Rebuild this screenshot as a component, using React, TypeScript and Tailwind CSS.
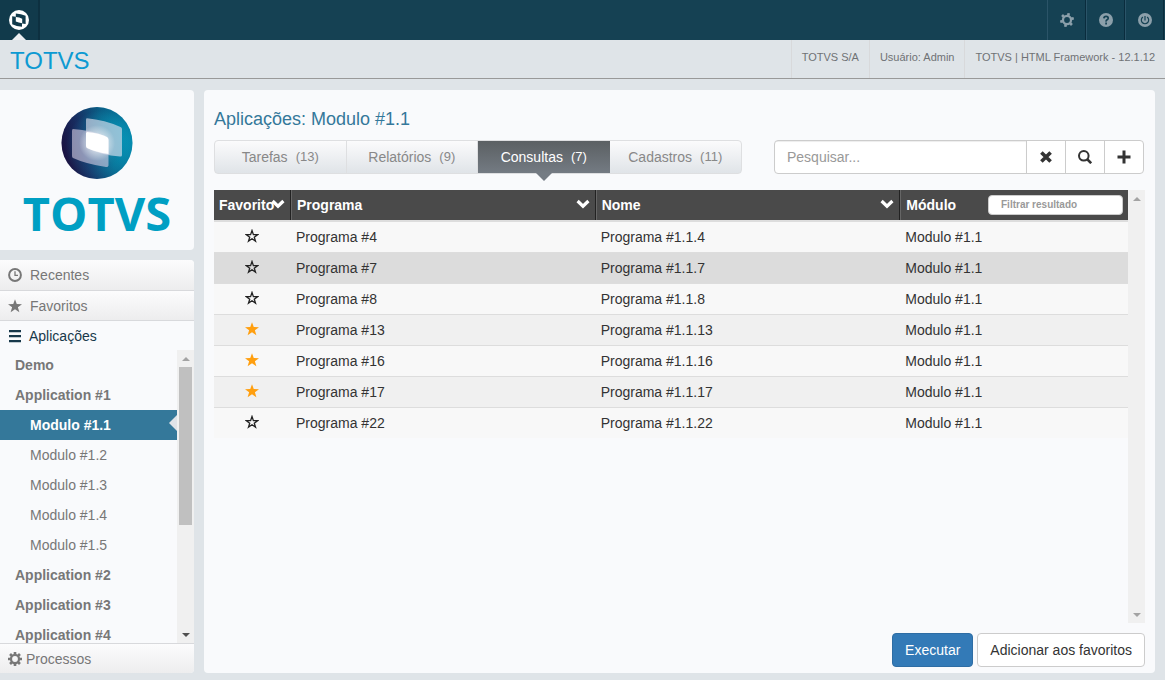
import type { ReactNode } from "react";

const STAR = "M8 0.2 10 5.8 16 5.9 11.3 9.5 13 15.2 8 11.8 3 15.2 4.7 9.5 0 5.9 6 5.8Z";

function StarIcon({ filled }: { filled: boolean }) {
  return filled ? (
    <svg viewBox="0 0 16 16" className="size-3.5 fill-[#ff9f0f]"><path d={STAR} /></svg>
  ) : (
    <svg viewBox="0 0 16 16" className="size-3.5 fill-none stroke-[#222] stroke-[1.5]">
      <path d="M8 1.7 9.6 6.4 14.4 6.5 10.6 9.4 12 13.9 8 11.2 4 13.9 5.4 9.4 1.6 6.5 6.4 6.4Z" />
    </svg>
  );
}

function Gear({ teeth, className }: { teeth: 6 | 8; className: string }) {
  const angles = Array.from({ length: teeth }, (_, i) => (i * 360) / teeth);
  return (
    <svg viewBox="0 0 16 16" className={className} stroke="currentColor" fill="none">
      <circle cx="8" cy="8" r="4.6" strokeWidth="2.6" />
      {angles.map((a) => (
        <path key={a} d="M8 0V3" strokeWidth="3" transform={`rotate(${a + (teeth === 6 ? 15 : 0)} 8 8)`} />
      ))}
    </svg>
  );
}

function Chevron() {
  return (
    <svg viewBox="0 0 14 14" className="size-3.5 fill-none stroke-white stroke-[3.2]">
      <path d="M1.6 4 7 9.2 12.4 4" />
    </svg>
  );
}

function ScrollArrow({ up, dark }: { up?: boolean; dark?: boolean }) {
  return (
    <span className="flex h-[17px] items-center justify-center">
      <svg viewBox="0 0 8 4" className={dark ? "h-1 w-2 fill-[#505050]" : "h-1 w-2 fill-[#a3a3a3]"}>
        <path d={up ? "M0 4 4 0 8 4Z" : "M0 0 4 4 8 0Z"} />
      </svg>
    </span>
  );
}

function BrandLogo() {
  return (
    <div className="flex h-40 flex-col items-center rounded-r bg-[#f9fafc] pt-4">
      <svg viewBox="0 0 72 74" className="h-[74px] w-[72px] shrink-0">
        <defs>
          <linearGradient id="orb" x1="0" x2="1" y1="0.65" y2="0.4">
            <stop offset="0" stopColor="#1d103d" />
            <stop offset="0.3" stopColor="#17376a" />
            <stop offset="0.65" stopColor="#06789c" />
            <stop offset="1" stopColor="#00a3c4" />
          </linearGradient>
          <radialGradient id="shade" cx="0.56" cy="0.55" r="0.5">
            <stop offset="0" stopColor="#6fb9d3" stopOpacity="0.5" />
            <stop offset="0.6" stopColor="#257ba2" stopOpacity="0.1" />
            <stop offset="1" stopColor="#171044" stopOpacity="0.25" />
          </radialGradient>
          <radialGradient id="glow">
            <stop offset="0" stopColor="#fff" />
            <stop offset="0.4" stopColor="#fff" stopOpacity="0.55" />
            <stop offset="1" stopColor="#fff" stopOpacity="0" />
          </radialGradient>
        </defs>
        <ellipse cx="36" cy="37" rx="35.5" ry="36" fill="url(#orb)" />
        <ellipse cx="36" cy="37" rx="35.5" ry="36" fill="url(#shade)" />
        <path d="M26 12.3Q44 14 59.5 21Q61 21.5 61 23V49Q61 51 59 50.5Q40 49 26 42Q25 41 25 39.5V14Q25 12 26 12.3Z" fill="#dcdfec" fillOpacity="0.65" />
        <path d="M12 23Q31 24 46 31Q47.5 32 47.5 34V59.5Q47 61.5 45 61Q25 58 12 52Q11 51.5 11 50V25Q11 23 12 23Z" fill="#d8cfe4" fillOpacity="0.6" />
        <circle cx="36" cy="37" r="18" fill="url(#glow)" />
        <path d="M26 26Q38 27 46 31Q47.5 32 47.5 34V48Q35 46 26 42Q25 41 25 39.5V27Z" fill="#fff" />
      </svg>
      <span className="font-['Open_Sans',sans-serif] text-[47px] font-bold leading-[66px] text-[#009fc3]">TOTVS</span>
    </div>
  );
}

const navItems = [
  { label: "Demo", level: 0 },
  { label: "Application #1", level: 0 },
  { label: "Modulo #1.1", level: 1, active: true },
  { label: "Modulo #1.2", level: 1 },
  { label: "Modulo #1.3", level: 1 },
  { label: "Modulo #1.4", level: 1 },
  { label: "Modulo #1.5", level: 1 },
  { label: "Application #2", level: 0 },
  { label: "Application #3", level: 0 },
  { label: "Application #4", level: 0 },
];

const tabs = [
  { label: "Tarefas", count: 13 },
  { label: "Relatórios", count: 9 },
  { label: "Consultas", count: 7, active: true },
  { label: "Cadastros", count: 11 },
];

const rows = [
  { id: 4, fav: false }, { id: 7, fav: false }, { id: 8, fav: false }, { id: 13, fav: true },
  { id: 16, fav: true }, { id: 17, fav: true }, { id: 22, fav: false },
];

function TopButton({ label, children }: { label: string; children: ReactNode }) {
  return (
    <button aria-label={label} className="flex w-[39px] items-center justify-center border-l border-r border-l-[#2b5468] border-r-[#0a2c3d] text-[#8b9faa]">
      {children}
    </button>
  );
}

function Sidebar() {
  const section = "flex shrink-0 items-center border-b border-[#d8d9dc] bg-linear-to-b from-[#fcfcfd] to-[#ededee] pl-2 text-[#777]";
  return (
    <aside className="flex w-[194px] shrink-0 flex-col gap-2.5">
      <BrandLogo />
      <nav className="flex min-h-0 flex-1 flex-col overflow-hidden rounded-r bg-[#f9fafc]">
        <button className={`${section} h-[31px] gap-2`}>
          <svg viewBox="0 0 14 14" className="size-3.5 fill-none stroke-current stroke-2">
            <circle cx="7" cy="7" r="5.9" /><path d="M7 3.2V7.4H10" strokeWidth="1.3" />
          </svg>
          Recentes
        </button>
        <button className={`${section} h-[30px] gap-2`}>
          <svg viewBox="0 0 16 16" className="size-3.5 fill-current"><path d={STAR} /></svg>
          Favoritos
        </button>
        <button className="flex h-[29px] shrink-0 items-center gap-2 pl-2 text-[#17384a]">
          <svg viewBox="0 0 13 14" className="h-3.5 w-[13px] fill-current">
            <path d="M1 1H13V3.2H1ZM1 6H13V8.2H1ZM1 11H13V13.2H1Z" />
          </svg>
          Aplicações
        </button>
        <div className="flex min-h-0 flex-1">
          <ul className="min-w-0 flex-1 overflow-hidden">
            {navItems.map((item) => (
              <li key={item.label}>
                <a
                  href="#"
                  className={
                    item.active
                      ? "relative flex h-[30px] items-center bg-[#34789a] pl-[30px] font-bold text-white"
                      : item.level === 1
                        ? "flex h-[30px] items-center pl-[30px] text-[#777]"
                        : "flex h-[30px] items-center pl-[15px] font-bold text-[#777]"
                  }
                >
                  {item.label}
                  {item.active && (
                    <svg viewBox="0 0 8 16" className="absolute right-0 top-[5px] h-4 w-2 fill-[#dfe3e8]"><path d="M8 0V16L0 8Z" /></svg>
                  )}
                </a>
              </li>
            ))}
          </ul>
          <div aria-hidden="true" className="flex w-[17px] flex-col bg-[#f0f0f0]">
            <ScrollArrow up />
            <div className="mx-0.5 h-[54%] bg-[#c0c0c0]" />
            <div className="mt-auto"><ScrollArrow dark /></div>
          </div>
        </div>
        <button className="flex h-[30px] shrink-0 items-center gap-1 border-t border-[#d8d9dc] bg-linear-to-b from-[#fcfcfd] to-[#ededee] pl-2 text-[#777]">
          <Gear teeth={8} className="size-3.5" />
          Processos
        </button>
      </nav>
    </aside>
  );
}

function Tabs() {
  return (
    <div role="tablist" className="grid h-[34px] w-[528px] grid-cols-4 rounded border border-[#dedfe1] bg-linear-to-b from-[#fbfbfc] to-[#e0e4e8]">
      {tabs.map((tab) => (
        <button
          key={tab.label}
          role="tab"
          aria-selected={!!tab.active}
          className={
            tab.active
              ? "relative flex items-center justify-center gap-2 bg-linear-to-b from-[#5b6063] to-[#747b83] text-white"
              : "flex items-center justify-center gap-2 border-r border-[#dedfe1] text-[#888] last:border-r-0"
          }
        >
          {tab.label}
          <span className="text-[13px]">({tab.count})</span>
          {tab.active && (
            <svg viewBox="0 0 16 8" className="absolute left-1/2 top-full h-2 w-4 -translate-x-1/2 fill-[#747b83]"><path d="M0 0H16L8 8Z" /></svg>
          )}
        </button>
      ))}
    </div>
  );
}

function SearchBar() {
  const button = "flex w-[39px] items-center justify-center border-l border-[#ccc] text-[#333]";
  return (
    <form className="flex h-[34px] min-w-0 flex-1 overflow-hidden rounded border border-[#ccc] bg-white">
      <input aria-label="Pesquisar" placeholder="Pesquisar..." className="min-w-0 flex-1 px-3 shadow-[inset_0_1px_1px_rgba(0,0,0,0.075)] outline-none placeholder:text-[#999]" />
      <button type="button" aria-label="Limpar" className={button}>
        <svg viewBox="0 0 14 14" className="size-3.5 fill-none stroke-current stroke-[3.6]"><path d="M2.4 2.4 11.6 11.6M11.6 2.4 2.4 11.6" /></svg>
      </button>
      <button type="button" aria-label="Buscar" className={button}>
        <svg viewBox="0 0 14 14" className="size-3.5 fill-none stroke-current stroke-2"><circle cx="5.8" cy="5.8" r="4.8" /><path d="M9 9 13.2 13.2" strokeWidth="2.6" /></svg>
      </button>
      <button type="button" aria-label="Adicionar filtro" className={button}>
        <svg viewBox="0 0 14 14" className="size-3.5 fill-none stroke-current stroke-3"><path d="M7 0.5V13.5M0.5 7H13.5" /></svg>
      </button>
    </form>
  );
}

function SortHeader({ label }: { label: string }) {
  return (
    <th className="relative border-r border-[#222] px-1.5 shadow-[inset_1px_0_0_#666] first:px-[5px] first:shadow-none">
      <span className="block overflow-hidden">{label}</span>
      <button aria-label={`Ordenar por ${label}`} className="absolute right-[5px] top-[7px]"><Chevron /></button>
    </th>
  );
}

function ProgramTable() {
  return (
    <div className="flex min-h-0 flex-1">
      <div className="min-w-0 flex-1 overflow-hidden">
        <table className="w-full table-fixed border-separate border-spacing-0 text-left">
          <colgroup>
            <col className="w-[77px]" />
            <col className="w-1/3" />
            <col className="w-1/3" />
            <col />
          </colgroup>
          <thead>
            <tr className="h-[30px] bg-[#4a4a4a] text-white">
              <SortHeader label="Favorito" />
              <SortHeader label="Programa" />
              <SortHeader label="Nome" />
              <th className="pl-1.5 pr-[5px] shadow-[inset_1px_0_0_#666]">
                <span className="flex items-center justify-between">
                  Módulo
                  <input aria-label="Filtrar resultado" placeholder="Filtrar resultado" className="h-5 w-[135px] rounded border border-[#ccc] bg-white px-3 text-[10px] font-bold text-[#555] outline-none placeholder:text-[#999]" />
                </span>
              </th>
            </tr>
            <tr aria-hidden="true" className="h-px bg-[#ddd]"><td colSpan={4} className="p-0" /></tr>
          </thead>
          <tbody className="text-[#333]">
            {rows.map((row, i) => (
              <tr key={row.id} className={i === 1 ? "h-[31px] bg-[#dcdcdc]" : i % 2 ? "h-[31px] bg-[#f0f0f0]" : "h-[31px] bg-[#f8f8f8]"}>
                <td className="border-t border-[#ddd] pb-0.5 pr-0.5">
                  <button aria-label="Favorito" className="mx-auto flex"><StarIcon filled={row.fav} /></button>
                </td>
                <td className="border-t border-[#ddd] px-[5px]">Programa #{row.id}</td>
                <td className="border-t border-[#ddd] px-[5px]">Programa #1.1.{row.id}</td>
                <td className="border-t border-[#ddd] px-[5px]">Modulo #1.1</td>
              </tr>
            ))}
          </tbody>
        </table>
      </div>
      <div aria-hidden="true" className="flex w-[17px] flex-col justify-between bg-[#f0f0f0]">
        <ScrollArrow up />
        <ScrollArrow />
      </div>
    </div>
  );
}

export default function App() {
  return (
    <div className="flex h-screen flex-col bg-[#dfe4e8] font-['Liberation_Sans',Arial,sans-serif] text-sm leading-5">
      <header className="flex h-10 shrink-0 justify-between bg-[#154153]">
        <button aria-label="Menu principal" className="flex w-10 flex-col items-center justify-end gap-[3px] border-r-2 border-[#0d3040] bg-[#113a4b]">
          <svg viewBox="0 0 20 20" className="size-5">
            <circle cx="10" cy="10" r="10" fill="#fff" />
            <path d="M6.8 3.4Q12 3.8 16.6 5.8V14Q11.5 13.7 6.8 11.6Z" fill="#113a4b" />
            <path d="M3.2 6.2Q8.5 6.4 13 8.6V16.8Q7.5 16.4 3.2 14.2Z" fill="#113a4b" />
            <path d="M6.8 6.9Q10.5 7.2 13.2 8.7V13.2Q9.5 12.9 6.8 11.6Z" fill="#fff" />
          </svg>
          <svg viewBox="0 0 14 7" className="h-[7px] w-3.5 fill-[#eceff2]"><path d="M0 7 7 0 14 7Z" /></svg>
        </button>
        <div className="flex pr-px">
          <TopButton label="Configurações"><Gear teeth={6} className="size-3.5" /></TopButton>
          <TopButton label="Ajuda">
            <svg viewBox="0 0 14 14" className="size-3.5"><circle cx="7" cy="7" r="7" fill="currentColor" /><path d="M4.9 5.4Q5 3.4 7.1 3.4T9.2 5.2Q9.2 6.2 8.1 6.8T7.1 8.6M7.1 9.6V11.4" fill="none" stroke="#154153" strokeWidth="1.7" /></svg>
          </TopButton>
          <TopButton label="Sair">
            <svg viewBox="0 0 14 14" className="size-3.5"><circle cx="7" cy="7" r="7" fill="currentColor" /><path d="M4.9 4A3.7 3.7 0 1 0 9.1 4M7 3V7.4" fill="none" stroke="#154153" strokeWidth="1.2" /></svg>
          </TopButton>
        </div>
      </header>
      <div className="flex h-[39px] shrink-0 justify-between border-b border-[#999]">
        <h1 className="pl-2.5 text-2xl leading-[41px] text-[#0d9ad2]">TOTVS</h1>
        <div className="flex text-[11px] leading-[34px] text-[#6f7275]">
          <span className="border-l border-[#d8d9db] px-2.5">TOTVS S/A</span>
          <span className="border-l border-[#d8d9db] px-2.5">Usuário: Admin</span>
          <span className="border-l border-[#d8d9db] px-2.5">TOTVS | HTML Framework - 12.1.12</span>
        </div>
      </div>
      <div className="flex min-h-0 flex-1 gap-2.5 pb-[7px] pr-2.5 pt-[11px]">
        <Sidebar />
        <main className="flex min-w-0 flex-1 flex-col rounded bg-[#f9fafc] px-2.5 pb-1.5 pt-[18px]">
          <h2 className="text-lg leading-[22px] text-[#34789a]">Aplicações: Modulo #1.1</h2>
          <div className="mb-4 mt-2.5 flex gap-8 pr-px">
            <Tabs />
            <SearchBar />
          </div>
          <ProgramTable />
          <footer className="mt-2.5 flex justify-end gap-1">
            <button className="h-[34px] rounded border border-[#2e6da4] bg-[#337ab7] px-3 text-white">Executar</button>
            <button className="h-[34px] rounded border border-[#ccc] bg-white px-3 text-[#333]">Adicionar aos favoritos</button>
          </footer>
        </main>
      </div>
    </div>
  );
}
